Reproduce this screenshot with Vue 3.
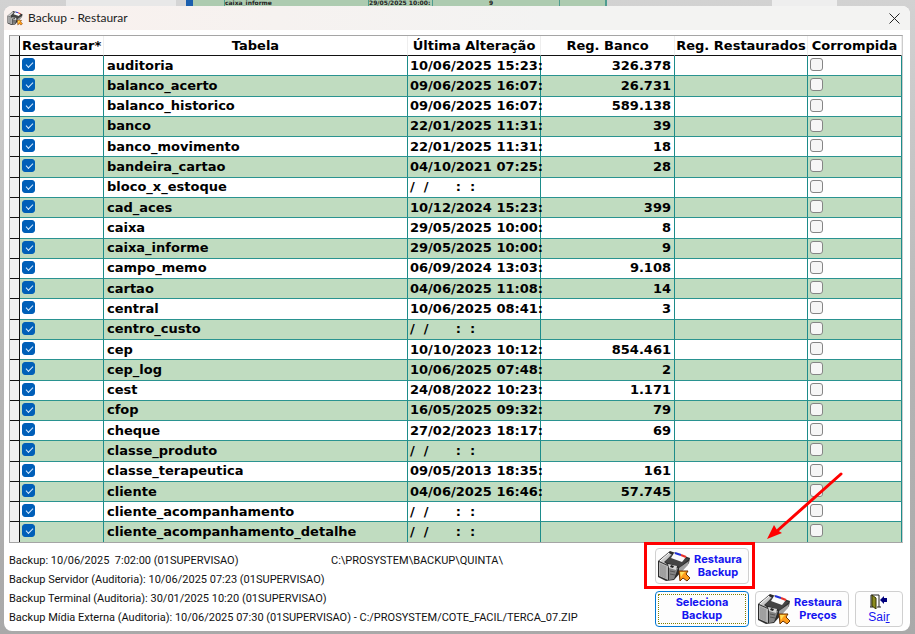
<template>
  <div class="desktop">
    <div class="behind" aria-hidden="true">
      <span class="behind-blank"></span>
      <span class="behind-light"></span>
      <span class="behind-cell check"></span>
      <span class="behind-cell name">caixa_informe</span>
      <span class="behind-cell date">29/05/2025 10:00:</span>
      <span class="behind-cell count">9</span>
      <span class="behind-cell rest"></span>
      <span class="behind-edge"></span>
    </div>

    <svg class="symbols" aria-hidden="true">
      <symbol id="disk" viewBox="0 0 34 32">
        <path d="M1 11 13 1 33 8 32 13 17 30 9 31 1 27Z" fill="#2c2c2c" />
        <path d="M2 12 11 16 11 30 2 26Z" fill="#b4b4b4" />
        <path d="M4 14V26M6 15V27M8 16V28" stroke="#8b8b8b" />
        <path d="M12 16 21 18 17 29 12 30Z" fill="#848484" />
        <path d="M2 11 12 3 15 5 7 12 11 15Z" fill="#c9c9c9" />
        <path d="M3 11 12 3" stroke="#fff" />
        <path d="M8 12 14 5 32 9 23 17Z" fill="#444" />
        <path d="M17 3 29 7 25 12 14 8Z" fill="#fafafa" />
        <path d="M18 3 24 5" stroke="#2030d8" stroke-width="2" />
        <path d="M24 5 29 7" stroke="#e83028" stroke-width="2" />
        <path d="M11 14 20 16 19 20 12 18Z" fill="#d8d8d8" />
        <path d="M14 15 17 16 16 18 13 17Z" fill="#222" />
        <path d="M22 18 32 11 31 15 22 24Z" fill="#a0a0a0" />
        <path d="M13 21 18 22M13 24 18 25" stroke="#555" />
        <path d="M22 21H31L29 24 33 28 30 31 26 28 23 31Z" fill="#ff9c1a" stroke="#6b3200" />
        <path d="M23 22H28L26 24 24 27Z" fill="#ffe05a" />
      </symbol>
    </svg>

    <main class="window">
      <header class="titlebar">
        <svg class="title-icon" aria-hidden="true"><use href="#disk" /></svg>
        <h1>Backup - Restaurar</h1>
        <button class="close" type="button" aria-label="Fechar">
          <svg viewBox="0 0 11 11"><path d="M0.5 0.5 10.5 10.5M10.5 0.5 0.5 10.5" /></svg>
        </button>
      </header>

      <div class="grid">
        <table>
          <colgroup>
            <col class="c-mark" />
            <col class="c-restore" />
            <col />
            <col class="c-date" />
            <col class="c-count" />
            <col class="c-restored" />
            <col class="c-broken" />
          </colgroup>
          <thead>
            <tr>
              <th></th>
              <th class="left">Restaurar*</th>
              <th>Tabela</th>
              <th>Última Alteração</th>
              <th>Reg. Banco</th>
              <th>Reg. Restaurados</th>
              <th>Corrompida</th>
            </tr>
          </thead>
          <tbody>
            <tr v-for="row in rows" :key="row.name">
              <td class="mark"></td>
              <td class="tick"><input type="checkbox" v-model="row.restore" :aria-label="'Restaurar ' + row.name" /></td>
              <td>{{ row.name }}</td>
              <td class="date">{{ row.date || emptyDate }}</td>
              <td class="number">{{ row.count }}</td>
              <td></td>
              <td class="tick"><input type="checkbox" v-model="row.broken" :aria-label="'Corrompida ' + row.name" /></td>
            </tr>
          </tbody>
        </table>
      </div>

      <footer class="bottom">
        <div class="info">
          <p class="pair"><span>Backup: 10/06/2025&nbsp; 7:02:00 (01SUPERVISAO)</span><span>C:\PROSYSTEM\BACKUP\QUINTA\</span></p>
          <p>Backup Servidor (Auditoria): 10/06/2025 07:23 (01SUPERVISAO)</p>
          <p>Backup Terminal (Auditoria): 30/01/2025 10:20 (01SUPERVISAO)</p>
          <p>Backup Mídia Externa (Auditoria): 10/06/2025 07:30 (01SUPERVISAO) - C:/PROSYSTEM/COTE_FACIL/TERCA_07.ZIP</p>
        </div>
        <div class="actions">
          <div class="marked">
            <button class="btn" type="button">
              <svg class="disk" aria-hidden="true"><use href="#disk" /></svg>
              <span>Restaura<br />Backup</span>
            </button>
            <span class="highlight"></span>
            <svg class="arrow" viewBox="0 0 78 70" aria-hidden="true">
              <path d="M75 3 11 60" stroke="#f00" stroke-width="3" stroke-linecap="round" />
              <path d="M1 68 8 54 11 59 16 62Z" fill="#f00" />
            </svg>
          </div>
          <button class="btn focused" type="button"><span>Seleciona<br />Backup</span></button>
          <button class="btn" type="button">
            <svg class="disk" aria-hidden="true"><use href="#disk" /></svg>
            <span>Restaura<br />Preços</span>
          </button>
          <button class="btn exit" type="button">
            <svg viewBox="0 0 18 15" aria-hidden="true">
              <path d="M1 13V1H9V13" fill="#fff" stroke="#222" />
              <path d="M2 1 6 4V15L2 12Z" fill="#8c8c20" stroke="#333300" />
              <path d="M0 13H3M7 13H11" stroke="#222" />
              <path d="M10 6 14 2V4H17V8H14V10Z" fill="#00007c" />
            </svg>
            <span>Sai<u>r</u></span>
          </button>
        </div>
      </footer>
    </main>
  </div>
</template>

<script setup>
import { reactive } from 'vue'

const emptyDate = '/  /      :  :'

const data = [
  ['auditoria', '10/06/2025 15:23:', '326.378'],
  ['balanco_acerto', '09/06/2025 16:07:', '26.731'],
  ['balanco_historico', '09/06/2025 16:07:', '589.138'],
  ['banco', '22/01/2025 11:31:', '39'],
  ['banco_movimento', '22/01/2025 11:31:', '18'],
  ['bandeira_cartao', '04/10/2021 07:25:', '28'],
  ['bloco_x_estoque', '', ''],
  ['cad_aces', '10/12/2024 15:23:', '399'],
  ['caixa', '29/05/2025 10:00:', '8'],
  ['caixa_informe', '29/05/2025 10:00:', '9'],
  ['campo_memo', '06/09/2024 13:03:', '9.108'],
  ['cartao', '04/06/2025 11:08:', '14'],
  ['central', '10/06/2025 08:41:', '3'],
  ['centro_custo', '', ''],
  ['cep', '10/10/2023 10:12:', '854.461'],
  ['cep_log', '10/06/2025 07:48:', '2'],
  ['cest', '24/08/2022 10:23:', '1.171'],
  ['cfop', '16/05/2025 09:32:', '79'],
  ['cheque', '27/02/2023 18:17:', '69'],
  ['classe_produto', '', ''],
  ['classe_terapeutica', '09/05/2013 18:35:', '161'],
  ['cliente', '04/06/2025 16:46:', '57.745'],
  ['cliente_acompanhamento', '', ''],
  ['cliente_acompanhamento_detalhe', '', '']
]

const rows = reactive(
  data.map(([name, date, count]) => ({ name, date, count, restore: true, broken: false }))
)
</script>

<style>
body {
  margin: 0;
}
</style>

<style scoped>
* {
  box-sizing: border-box;
}

.desktop {
  display: flex;
  flex-direction: column;
  min-height: 100vh;
  padding: 0 5px 3px 4px;
  background: linear-gradient(#d2d2d2, #b4b4b4 60%, #a9a9a9);
  font-family: "Liberation Sans", sans-serif;
}

.behind {
  display: flex;
  height: 6px;
  color: #222;
  font: 700 6px/6px "DejaVu Sans", sans-serif;
  white-space: nowrap;
}

.behind-blank {
  width: 62px;
}

.behind-light {
  width: 110px;
  background: #e8e8e8;
}

.behind-cell {
  border-left: 1px solid #4f9c90;
  background: #adcbb0;
}

.behind-cell.check {
  width: 48px;
  border-left: 10px solid #d5d5d5;
  background: linear-gradient(90deg, #1b5fae 7px, #adcbb0 7px);
}

.behind-cell.name {
  width: 144px;
}

.behind-cell.date {
  width: 64px;
}

.behind-cell.count {
  width: 127px;
  padding-left: 56px;
}

.behind-cell.rest {
  width: 48px;
  border-right: 2px solid #4f9c90;
}

.behind-edge {
  width: 65px;
  margin-left: 165px;
  background: #eee;
}

.symbols {
  position: absolute;
  width: 0;
  height: 0;
}

.window {
  display: flex;
  flex: 1;
  flex-direction: column;
  overflow: hidden;
  border-radius: 8px;
  background: #fff;
}

.titlebar {
  display: flex;
  align-items: center;
  height: 24px;
  padding: 0 10px 0 3px;
  background: linear-gradient(90deg, #f9f1ee, #f3f3f2 60%);
}

.title-icon {
  width: 16px;
  height: 16px;
}

h1 {
  flex: 1;
  margin: 0 0 0 5px;
  color: #222;
  font: 400 12px/16px Lato, sans-serif;
}

.close {
  width: 11px;
  height: 11px;
  padding: 0;
  border: 0;
  background: none;
}

.close svg {
  display: block;
  fill: none;
  stroke: #222;
}

.grid {
  display: flex;
  flex: 1;
  margin: 5px 7px 0 5px;
  border: 1px solid #a5a5a5;
  border-right-color: #ccc;
}

table {
  width: 100%;
  table-layout: fixed;
  border-spacing: 0;
  color: #000;
  font: 700 13px/18px "DejaVu Sans", sans-serif;
}

.c-mark {
  width: 10px;
}

.c-restore {
  width: 84px;
}

.c-date,
.c-restored {
  width: 133px;
}

.c-count {
  width: 134px;
}

.c-broken {
  width: 94px;
}

th,
td {
  overflow: hidden;
  padding: 0;
  white-space: nowrap;
}

th {
  height: 20px;
  border-right: 1px solid #eee;
  border-bottom: 1px solid #111;
  font-weight: 700;
  text-align: center;
}

th.left {
  padding-left: 2px;
  text-align: left;
}

td {
  padding-left: 3px;
  border-right: 1px solid #1d8c8a;
  border-bottom: 1px solid #2a9390;
}

tbody tr:nth-child(even) {
  background: #c0dcc0;
}

th:first-child,
td.mark {
  border-right: 1px solid #111;
  border-bottom: 1px solid #111;
  background: #f0f0f0;
}

tr:last-child td {
  border-bottom: 0;
}

td.date {
  overflow: visible;
  padding-left: 2px;
  white-space: pre;
}

td.number {
  padding-right: 3px;
  text-align: right;
}

td.tick {
  padding-left: 2px;
  vertical-align: top;
}

input {
  display: block;
  width: 13px;
  height: 13px;
  margin: 2px 0 0;
  appearance: none;
  border: 1px solid #858585;
  border-radius: 3px;
  background: #f6f6f6;
}

input:checked {
  border-color: #005fb8;
  background: #005fb8;
}

input:checked::after {
  display: block;
  width: 6px;
  height: 3px;
  margin: 3px 0 0 3px;
  border: solid #d8ecff;
  border-width: 0 0 1px 1px;
  content: "";
  transform: rotate(-45deg);
}

.bottom {
  display: flex;
  justify-content: space-between;
  padding: 5px 7px 4px 5px;
}

.info {
  padding-top: 3px;
  color: #111;
  font: 400 11px/19px Roboto, sans-serif;
}

p {
  margin: 0;
  white-space: nowrap;
}

.pair span:first-child {
  display: inline-block;
  width: 322px;
}

.actions {
  display: grid;
  grid-template-columns: 94px 94px 48px;
  grid-template-rows: 36px 36px;
  align-content: start;
  gap: 7px 6px;
}

.marked {
  position: relative;
  grid-column: 1 / -1;
  width: 94px;
}

.highlight {
  position: absolute;
  inset: -6px -6px -5px -11px;
  border: 3px solid #f00;
}

.arrow {
  position: absolute;
  bottom: 43px;
  left: 111px;
  width: 78px;
  height: 70px;
  fill: none;
}

.btn {
  display: flex;
  align-items: center;
  justify-content: center;
  gap: 3px;
  width: 100%;
  height: 36px;
  padding: 0 5px 0 0;
  border: 1px solid #d0d0d0;
  border-radius: 4px;
  background: #fdfdfd;
  color: #1414f0;
  font: 700 11px/13px Inter, sans-serif;
  text-align: center;
}

.btn.focused {
  padding: 0;
  border-color: #0078d4;
  outline: 1px dotted #808000;
  outline-offset: -4px;
}

.disk {
  width: 34px;
  height: 32px;
}

.btn.exit {
  flex-direction: column;
  gap: 2px;
  padding: 0;
  font: 400 12px/13px "Liberation Sans", sans-serif;
}

.exit svg {
  width: 18px;
  height: 15px;
}
</style>
